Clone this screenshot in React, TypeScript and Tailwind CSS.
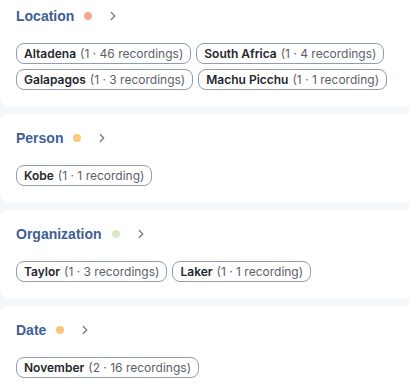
import { ChevronRight } from 'lucide-react';

interface Tag {
  name: string;
  count: number;
  recordings: number;
}

interface Group {
  title: string;
  dot: string;
  tags: Tag[];
}

const groups: Group[] = [
  {
    title: 'Location',
    dot: 'bg-[#f8a88c]',
    tags: [
      { name: 'Altadena', count: 1, recordings: 46 },
      { name: 'South Africa', count: 1, recordings: 4 },
      { name: 'Galapagos', count: 1, recordings: 3 },
      { name: 'Machu Picchu', count: 1, recordings: 1 },
    ],
  },
  {
    title: 'Person',
    dot: 'bg-[#fbc97c]',
    tags: [{ name: 'Kobe', count: 1, recordings: 1 }],
  },
  {
    title: 'Organization',
    dot: 'bg-[#d9e9c8]',
    tags: [
      { name: 'Taylor', count: 1, recordings: 3 },
      { name: 'Laker', count: 1, recordings: 1 },
    ],
  },
  {
    title: 'Date',
    dot: 'bg-[#fbc47c]',
    tags: [{ name: 'November', count: 2, recordings: 16 }],
  },
];

function TagChip({ tag }: { tag: Tag }) {
  return (
    <span className="inline-flex h-[21px] items-center rounded-[8px] border border-[#8d9db3] px-[7px] font-['Inter',sans-serif] text-[12px] leading-none whitespace-nowrap">
      <span className="font-semibold text-[#24272b]">{tag.name}</span>
      <span className="ml-[4px] text-[#5b6168]">
        ({tag.count} · {tag.recordings} recording{tag.recordings !== 1 ? 's' : ''})
      </span>
    </span>
  );
}

function GroupCard({ group, first }: { group: Group; first?: boolean }) {
  return (
    <section className={`shrink-0 rounded-l-lg bg-white pl-[16px] pr-2 pt-[14px] pb-[16px] ${first ? '-mt-[8px]' : ''}`}>
      <div className="flex h-[20px] items-center">
        <h3 className="text-[14px] font-bold text-[#3e5e94]">{group.title}</h3>
        <span className={`ml-[10px] h-[8px] w-[8px] rounded-full ${group.dot}`} />
        <ChevronRight className="ml-[14px] h-[14px] w-[14px] text-[#777c82]" strokeWidth={2.2} />
      </div>
      <div className="mt-[17px] flex flex-wrap gap-[5px]">
        {group.tags.map((t) => (
          <TagChip key={t.name} tag={t} />
        ))}
      </div>
    </section>
  );
}

export default function App() {
  return (
    <div
      className="flex h-[385px] w-[409px] flex-col gap-[8px] overflow-hidden bg-[#f6f7f9]"
      style={{ fontFamily: "'Liberation Sans', Arial, sans-serif" }}
    >
      {groups.map((g, i) => (
        <GroupCard key={g.title} group={g} first={i === 0} />
      ))}
    </div>
  );
}
